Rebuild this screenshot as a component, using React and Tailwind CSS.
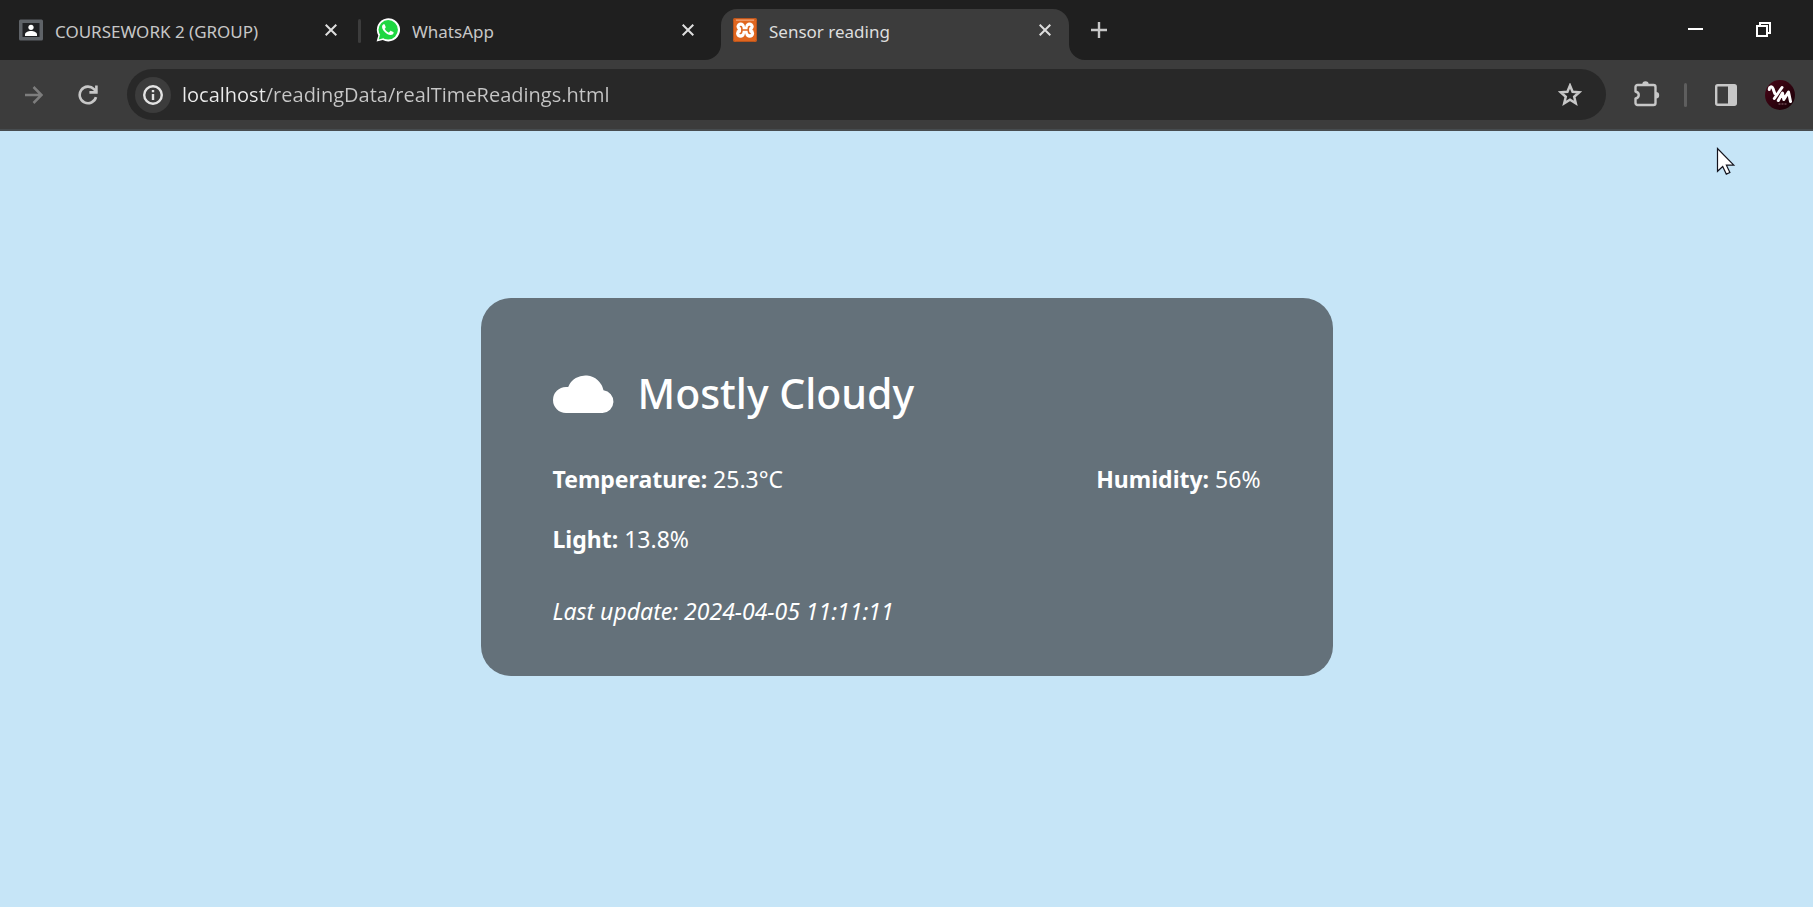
import React from "react";

function CloseIcon() {
  return (
    <svg viewBox="0 0 12 12" className="size-3" fill="none" stroke="currentColor" strokeWidth="2">
      <path d="M.7.7l10.600 10.600M11.300.7L.7 11.300" />
    </svg>
  );
}

function Tab({ icon, title, active }) {
  return (
    <div className="flex h-full min-w-0 flex-1 items-center">
      <button
        type="button"
        role="tab"
        aria-selected={!!active}
        className={
          active
            ? "flex min-w-0 flex-1 items-center gap-3 text-left text-[17px] leading-6 text-[#dedede]"
            : "flex min-w-0 flex-1 items-center gap-3 text-left text-[17px] leading-6 text-[#c7c7c7]"
        }
      >
        {icon}
        <span className="truncate pt-1">{title}</span>
      </button>
      <button
        type="button"
        aria-label={"Close " + title}
        className="flex size-6 shrink-0 items-center justify-center text-[#dedede]"
      >
        <CloseIcon />
      </button>
    </div>
  );
}

function ClassroomIcon() {
  return (
    <svg viewBox="0 0 24 24" className="size-6 shrink-0">
      <rect x="0" y="1.500" width="24" height="21" rx="1.500" fill="#5f6368" />
      <rect x="3.500" y="5" width="17" height="14" fill="#202124" />
      <circle cx="12" cy="9.300" r="2.600" fill="#fff" />
      <path d="M6 18v-1.500c0-2.200 3-3.500 6-3.500s6 1.300 6 3.500V18z" fill="#fff" />
    </svg>
  );
}

function WhatsAppIcon() {
  return (
    <svg viewBox="0 0 24 24" className="size-6 shrink-0">
      <path d="M.6 23.600l1.700-6.100A11.600 11.600 0 1 1 6.800 22z" fill="#fff" />
      <circle cx="12.200" cy="11.800" r="9.700" fill="#1fd741" />
      <path d="M2.700 21.500l1.500-5.400 4 4z" fill="#1fd741" />
      <path
        d="M8.700 6.500c-.3-.5-1.200-.5-1.600 0-2 2-.7 4.700 1 6.700 1.900 2.300 4.200 3.900 6.600 3.900 1.500 0 2.700-.9 2.900-2 .1-.5.100-.9-.3-1.100l-2.200-1.100c-.4-.2-.7-.1-1 .3l-.9 1.100c-.2.200-.5.300-.8.100-1.500-.7-2.800-1.800-3.600-3.300-.2-.3 0-.5.200-.7.400-.5.900-1 .7-1.500z"
        fill="#fff"
      />
    </svg>
  );
}

function XamppIcon() {
  return (
    <svg viewBox="0 0 24 24" className="size-6 shrink-0">
      <rect width="24" height="24" rx="2" fill="#e0661f" />
      <rect x=".5" y=".5" width="23" height="23" rx="2" fill="none" stroke="#b9541c" />
      <rect x="3" y="1.500" width="18" height="1.300" fill="#f2a274" />
      <g fill="#fff">
        <circle cx="7.700" cy="8.600" r="4.200" />
        <circle cx="16.500" cy="8.600" r="4.200" />
        <circle cx="7.500" cy="15.400" r="4.400" />
        <circle cx="16.700" cy="15.400" r="4.400" />
        <rect x="6" y="9" width="12.200" height="6.500" />
      </g>
      <path
        d="M7.500 8.500q1.600 0 1.400 3.500M7.200 15.500q1.800 0 1.700-3.500h6.400M16.700 8.500q-1.600 0-1.400 3.500 0 3.500 1.700 3.500"
        fill="none"
        stroke="#e0661f"
        strokeWidth="1.600"
        strokeLinecap="round"
      />
    </svg>
  );
}

export default function App() {
  return (
    <div className="relative flex min-h-screen flex-col bg-[#c6e5f7] font-['Noto_Sans','Open_Sans',sans-serif]">
      <header>
        <div className="flex h-15 items-end bg-[#1f1f1f]">
          <div role="tablist" className="flex h-[51px] min-w-0 max-w-[1069px] flex-1">
            <div className="flex h-[42px] w-[358px] pl-[19px] pr-[15px]">
              <Tab icon={<ClassroomIcon />} title="COURSEWORK 2 (GROUP)" />
            </div>
            <div className="mt-[10px] h-6 w-[3px] shrink-0 rounded-full bg-[#3c3c3c]" />
            <div className="flex h-[42px] w-[360px] pl-[15px] pr-[21px]">
              <Tab icon={<WhatsAppIcon />} title="WhatsApp" />
            </div>
            <div className="relative h-full w-[348px] rounded-t-[16px] bg-[#3c3c3c] px-3">
              <svg viewBox="0 0 16 16" className="absolute -left-4 bottom-0 size-4">
                <path d="M16 0v16H0A16 16 0 0 0 16 0z" fill="#3c3c3c" />
              </svg>
              <svg viewBox="0 0 16 16" className="absolute -right-4 bottom-0 size-4">
                <path d="M0 0v16h16A16 16 0 0 1 0 0z" fill="#3c3c3c" />
              </svg>
              <div className="flex h-[42px]">
                <Tab active icon={<XamppIcon />} title="Sensor reading" />
              </div>
            </div>
          </div>
          <button type="button" aria-label="New tab" className="mb-[18px] ml-[18px] flex size-6 items-center justify-center text-[#c7c7c7]">
            <svg viewBox="0 0 16 16" className="size-4" fill="none" stroke="currentColor" strokeWidth="2.400">
              <path d="M8 0v16M0 8h16" />
            </svg>
          </button>
          <div className="mb-[18px] ml-auto flex items-center gap-11 pr-[37px] text-white">
            <button type="button" aria-label="Minimize" className="flex size-6 items-center justify-center">
              <svg viewBox="0 0 16 16" className="size-4" shapeRendering="crispEdges">
                <path d="M0 6h15v2H0z" fill="currentColor" />
              </svg>
            </button>
            <button type="button" aria-label="Restore" className="flex size-6 items-center justify-center">
              <svg viewBox="0 0 16 16" className="size-4" fill="none" stroke="currentColor" strokeWidth="2" shapeRendering="crispEdges">
                <path d="M1 4h10v10H1zM4 4V1h10v10h-3" />
              </svg>
            </button>
          </div>
        </div>

        <div className="flex h-[71px] items-center border-b-2 border-[#474c4f] bg-[#3c3c3c] pl-[22px] pr-[18px]">
          <button type="button" aria-label="Forward" className="flex size-6 items-center justify-center text-[#7d7d7d]">
            <svg viewBox="0 0 18 18" className="size-[18px]" fill="none" stroke="currentColor" strokeWidth="2.500">
              <path d="M0 9h16M8.500 1L16.500 9l-8 8" />
            </svg>
          </button>
          <button type="button" aria-label="Reload" className="ml-[30px] flex size-6 items-center justify-center text-[#c7c7c7]">
            <svg viewBox="0 0 20 20" className="size-5" fill="none" stroke="currentColor" strokeWidth="2.600">
              <path d="M18 12.200A8.300 8.300 0 1 1 16 4.200L18.500 7" />
              <path d="M18.400 0.500V7.400H11.400" />
            </svg>
          </button>
          <div className="ml-[27px] flex h-[51px] min-w-0 flex-1 items-center rounded-full bg-[#282828] pl-2 pr-6">
            <button
              type="button"
              aria-label="View site information"
              className="flex size-9 shrink-0 items-center justify-center rounded-full bg-[#3c3c3c] text-[#e3e3e3]"
            >
              <svg viewBox="0 0 20 20" className="size-5" fill="none" stroke="currentColor" strokeWidth="2.400">
                <circle cx="10" cy="10" r="8.800" />
                <path d="M10 9v6M10 5v2.200" />
              </svg>
            </button>
            <input
              aria-label="Address"
              readOnly
              value="localhost/readingData/realTimeReadings.html"
              className="ml-[11px] h-8 min-w-0 flex-1 bg-linear-to-r from-[#ececec] from-[84px] to-[#c7c7c7] to-[84px] bg-clip-text font-['Open_Sans','Noto_Sans',sans-serif] text-[20px] leading-8 text-transparent outline-none"
            />
            <button type="button" aria-label="Bookmark" className="flex size-6 items-center justify-center text-[#c7c7c7]">
              <svg viewBox="0 0 24 24" className="size-6" fill="none" stroke="currentColor" strokeWidth="2.500">
                <path d="M12 2.500l2.600 6.200 6.700.6-5.100 4.400 1.600 6.600L12 16.800l-5.800 3.500 1.600-6.600-5.100-4.400 6.700-.6z" />
              </svg>
            </button>
          </div>
          <button type="button" aria-label="Extensions" className="ml-[26px] flex size-7 items-center justify-center text-[#c7c7c7]">
            <svg viewBox="0 0 28 28" className="size-7">
              <path
                d="M5.500 4h16a2 2 0 0 1 2 2v16a2 2 0 0 1-2 2h-16a2 2 0 0 1-2-2v-4.500c4-.7 4.700-5.800 0-7V6a2 2 0 0 1 2-2z"
                fill="none"
                stroke="currentColor"
                strokeWidth="2.400"
                strokeLinejoin="round"
              />
              <path d="M10.300 3.500a3.200 3.200 0 0 1 6.400 0zM24 11a3.200 3.200 0 0 1 0 6.400z" fill="currentColor" />
            </svg>
          </button>
          <div className="ml-6 h-6 w-[3px] rounded-full bg-[#5e5e5e]" />
          <button type="button" aria-label="Side panel" className="ml-[27px] flex size-6 items-center justify-center text-[#c7c7c7]">
            <svg viewBox="0 0 22 22" className="size-[22px]">
              <rect x="1.200" y="1.200" width="19.600" height="19.600" rx="1.500" fill="none" stroke="currentColor" strokeWidth="2.400" />
              <path d="M13 1h8v20h-8z" fill="currentColor" />
            </svg>
          </button>
          <button type="button" aria-label="Profile" className="ml-[27px] size-[30px] overflow-hidden rounded-full">
            <svg viewBox="0 0 30 30" className="size-[30px]">
              <defs>
                <linearGradient id="avatar" x1="0" y1="0" x2="1" y2="1">
                  <stop offset="0" stopColor="#4a0618" />
                  <stop offset="1" stopColor="#170006" />
                </linearGradient>
              </defs>
              <rect width="30" height="30" fill="url(#avatar)" />
              <path
                d="M4.300 9.500C4 6.500 7 6 8 8.500l1.800 5M17 7.500L9.300 18.500"
                fill="none"
                stroke="#fff"
                strokeWidth="3"
                strokeLinecap="round"
              />
              <path
                d="M13.300 20.500L17.500 13l1.300 6.500 4.700-7.500 2 9.500"
                fill="none"
                stroke="#fff"
                strokeWidth="3"
                strokeLinejoin="round"
                strokeLinecap="round"
              />
              <path d="M13.500 24h9" stroke="#8d6a73" strokeWidth="1" strokeDasharray="2 1" />
            </svg>
          </button>
        </div>
      </header>

      <main className="flex flex-1 flex-col items-center px-6 pt-[167px]">
        <section className="w-full max-w-[852px] rounded-[30px] bg-[#64717a] px-[72px] pb-[47px] pt-[67px] text-[23px] leading-[36px] text-white">
          <div className="flex items-center gap-6">
            <svg viewBox="0 0 61 40" className="h-10 w-[61px] shrink-0">
              <path d="M13 40a13 13 0 0 1 0-26h2.200A18.500 18.500 0 0 1 50.500 17.300 11.400 11.400 0 0 1 49.500 40z" fill="#fff" />
            </svg>
            <h1 className="text-[41px] font-medium leading-[56px]">Mostly Cloudy</h1>
          </div>
          <div className="mt-[40px] flex flex-wrap justify-between gap-x-6">
            <p><strong className="font-bold">Temperature:</strong> 25.3°C</p>
            <p><strong className="font-bold">Humidity:</strong> 56%</p>
          </div>
          <p className="mt-6"><strong className="font-bold">Light:</strong> 13.8%</p>
          <p className="mt-9 italic">Last update: 2024-04-05 11:11:11</p>
        </section>
      </main>

      <svg viewBox="0 0 20 30" className="pointer-events-none absolute right-[77px] top-[147px] h-[30px] w-5">
        <path d="M1.500 1.500v22.800l5.200-4.700 3.600 7.500 3.600-1.600-3.500-7.300h7.400z" fill="#fff" stroke="#14141e" strokeWidth="1.200" />
      </svg>
    </div>
  );
}
